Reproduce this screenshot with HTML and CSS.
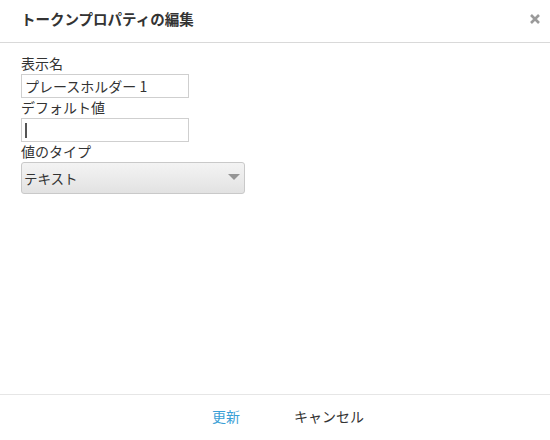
FILE: index.html
```html
<!DOCTYPE html>
<html lang="ja">
<head>
<meta charset="utf-8">
<link rel="stylesheet" href="styles.css">
</head>
<body>
<div class="dialog">
  <div class="header">
    <div class="title">トークンプロパティの編集</div>
    <svg class="close" width="12" height="12" viewBox="0 0 12 12"><path d="M2 2L10 10M10 2L2 10" stroke="#9a9a9a" stroke-width="2.6" stroke-linecap="butt"/></svg>
  </div>
  <div class="body">
    <div class="label">表示名</div>
    <div class="input">プレースホルダー 1</div>
    <div class="label">デフォルト値</div>
    <div class="input"><span class="caret"></span></div>
    <div class="label">値のタイプ</div>
    <div class="select"><span>テキスト</span><span class="arrow"></span></div>
  </div>
  <div class="footer">
    <span class="btn primary">更新</span>
    <span class="btn">キャンセル</span>
  </div>
</div>
</body>
</html>
```
FILE: styles.css
```css
html, body {
  margin: 0;
  padding: 0;
  background: #fff;
}
body {
  font-family: "Noto Sans CJK JP", "Noto Sans", sans-serif;
  color: #333;
}
.dialog {
  width: 550px;
  height: 440px;
  display: flex;
  flex-direction: column;
}
.header {
  border-bottom: 1px solid #d9d9d9;
  display: flex;
  align-items: center;
  justify-content: space-between;
  padding: 0 9px 0 21px;
  box-sizing: border-box;
  height: 43px;
}
.title {
  font-size: 14.5px;
  font-weight: bold;
  color: #333;
  margin-top: -5px;
}
.close {
  margin-top: -5px;
}
.body {
  flex: 1;
  padding: 11px 21px 0;
  display: flex;
  flex-direction: column;
  align-items: flex-start;
}
.label {
  font-size: 14px;
  line-height: 18px;
  height: 20px;
  color: #333;
}
.input {
  width: 168px;
  height: 24px;
  box-sizing: border-box;
  border: 1px solid #cfcfcf;
  font-size: 14px;
  line-height: 22px;
  padding: 0 3px;
  color: #333;
  display: flex;
  align-items: center;
}
.caret {
  display: block;
  width: 2px;
  height: 15px;
  background: #555;
}
.select {
  width: 224px;
  height: 32px;
  box-sizing: border-box;
  border: 1px solid #c9c9c9;
  border-radius: 3px;
  background: linear-gradient(to bottom, #f3f3f3 0%, #ececec 45%, #e2e2e2 100%);
  display: flex;
  align-items: center;
  justify-content: space-between;
  padding: 0 4px 0 2px;
  font-size: 13.5px;
  color: #333;
}
.arrow {
  width: 0;
  height: 0;
  border-left: 6px solid transparent;
  border-right: 6px solid transparent;
  border-top: 6px solid #959595;
  margin-top: -2px;
}
.footer {
  height: 46px;
  border-top: 1px solid #e6e6e6;
  display: flex;
  align-items: center;
  justify-content: center;
  gap: 54px;
  padding: 0 0 4px 26px;
  box-sizing: border-box;
}
.btn {
  font-size: 14px;
  color: #333;
}
.btn.primary {
  color: #3a9fd6;
}
```
